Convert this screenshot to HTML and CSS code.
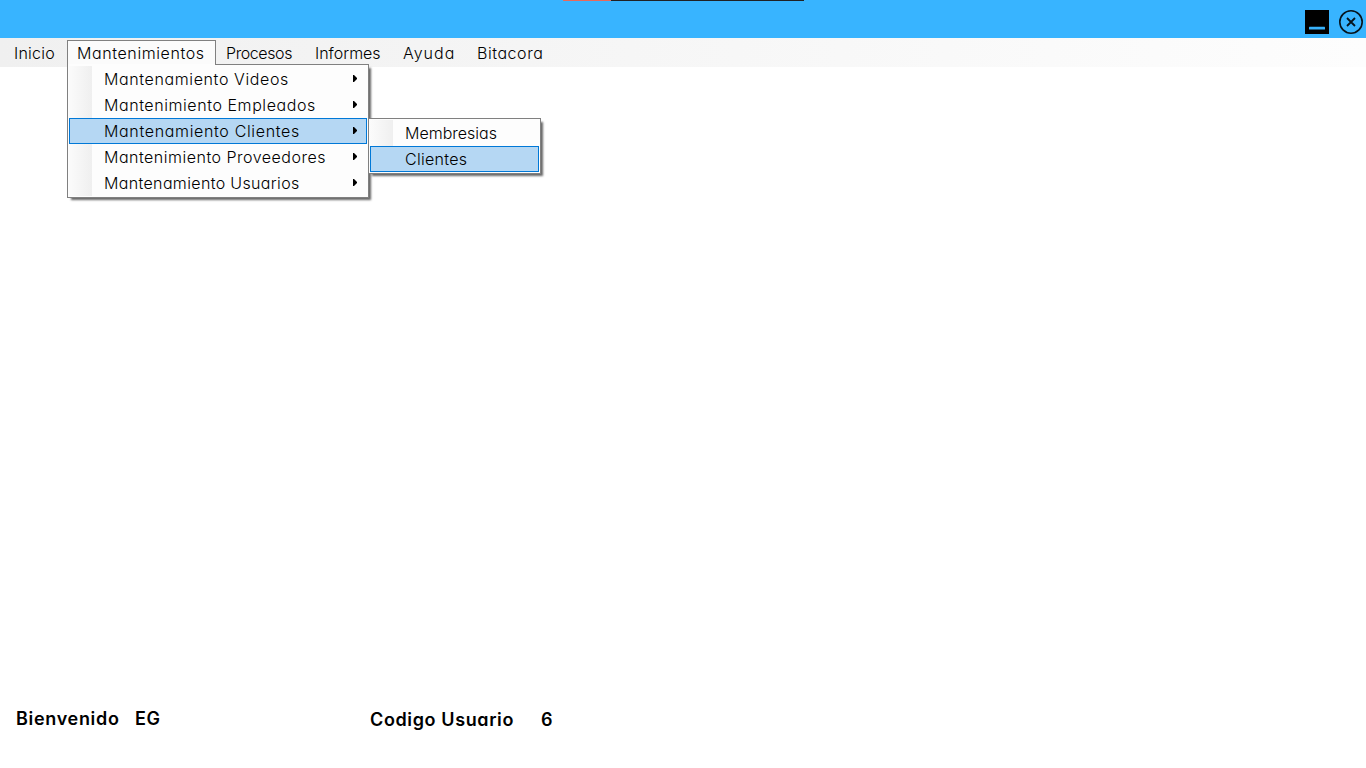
FILE: index.html
```html
<!DOCTYPE html>
<html lang="es">
<head>
<meta charset="utf-8">
<title>Mantenimientos</title>
<link rel="stylesheet" href="styles.css">
</head>
<body>
<div class="window">
  <header class="titlebar">
    <div class="top-strip"></div>
    <svg class="minimize" width="24" height="24" viewBox="0 0 24 24"><rect width="24" height="24" fill="#000"/><rect x="4" y="16.8" width="16" height="2.7" rx=".5" fill="#38b2fc"/></svg>
    <svg class="close" width="24" height="24" viewBox="0 0 24 24" fill="none" stroke="#06141d"><circle cx="12" cy="12" r="11.2" stroke-width="1.6"/><path d="M8 8l8 8M16 8l-8 8" stroke-width="1.8"/></svg>
  </header>
  <nav class="menubar">
    <span class="menu inicio">Inicio</span>
    <div class="menu open"><span class="mant">Mantenimientos</span>
      <div class="dropdown main-menu">
        <div class="item"><span class="videos">Mantenamiento Videos</span><svg class="arrow" width="4" height="7"><path d="M0 0h1l3 3v1l-3 3H0z"/></svg></div>
        <div class="item"><span class="empleados">Mantenimiento Empleados</span><svg class="arrow" width="4" height="7"><path d="M0 0h1l3 3v1l-3 3H0z"/></svg></div>
        <div class="item selected"><span class="clientes">Mantenamiento Clientes</span><svg class="arrow" width="4" height="7"><path d="M0 0h1l3 3v1l-3 3H0z"/></svg></div>
        <div class="item"><span class="proveedores">Mantenimiento Proveedores</span><svg class="arrow" width="4" height="7"><path d="M0 0h1l3 3v1l-3 3H0z"/></svg></div>
        <div class="item"><span class="usuarios">Mantenamiento Usuarios</span><svg class="arrow" width="4" height="7"><path d="M0 0h1l3 3v1l-3 3H0z"/></svg></div>
      </div>
      <div class="dropdown submenu">
        <div class="item"><span class="membresias">Membresias</span></div>
        <div class="item selected"><span class="cli">Clientes</span></div>
      </div>
    </div>
    <span class="menu procesos">Procesos</span>
    <span class="menu informes">Informes</span>
    <span class="menu ayuda">Ayuda</span>
    <span class="menu bitacora">Bitacora</span>
  </nav>
  <main class="workspace"></main>
  <footer class="status">
    <span class="welcome">Bienvenido</span>
    <span class="user">EG</span>
    <span class="code-label">Codigo Usuario</span>
    <span class="code">6</span>
  </footer>
</div>
</body>
</html>
```
FILE: styles.css
```css
* { box-sizing: border-box; }
body { margin: 0; background: #fff; color: #000; font-family: "Century Gothic", Inter, "Liberation Sans", sans-serif; font-size: 16px; font-weight: 300; font-feature-settings: "cv11" 1; }
.window { display: flex; flex-direction: column; width: 100%; height: 768px; overflow: hidden; }
.titlebar { position: relative; display: flex; justify-content: flex-end; gap: 10px; height: 38px; padding: 10px 3px 0 0; background: #38b4ff; }
.top-strip { position: absolute; top: 0; left: 563px; width: 241px; height: 1px; background: linear-gradient(90deg, #e8695b 48px, #202124 48px); }
.menubar { display: flex; height: 29px; padding-left: 14px; background: linear-gradient(90deg, #f0f0f0, #fdfdfd); line-height: 30px; white-space: nowrap; }
.menu { flex: none; }
.inicio { width: 53px; letter-spacing: .25px; }
.open { position: relative; width: 149px; height: 26px; margin-top: 2px; padding-left: 9px; border: 1px solid #808080; border-bottom: 0; background: #fbfbfb; line-height: 25px; }
.mant { letter-spacing: .6px; }
.procesos { width: 89px; margin-left: 10px; letter-spacing: -.4px; }
.informes { width: 88px; }
.ayuda { width: 74px; letter-spacing: 1px; }
.bitacora { letter-spacing: .55px; }
.dropdown { position: absolute; border: 1px solid #808080; background: #fdfdfd; box-shadow: 3px 3px 2px -1px rgba(0,0,0,.6); padding: 1px; }
.dropdown::before { content: ""; position: absolute; top: 1px; bottom: 1px; left: 1px; width: 23px; background: linear-gradient(90deg, #fbfbfb, #efefef); }
.main-menu { left: -1px; top: 23px; width: 302px; height: 134px; }
.main-menu::after { content: ""; position: absolute; top: -1px; left: 0; width: 147px; height: 1px; background: #fdfdfd; }
.submenu { left: 300px; top: 77px; width: 173px; height: 56px; }
.item { position: relative; display: flex; align-items: center; justify-content: space-between; height: 26px; padding: 0 10px 0 35px; line-height: 26px; }
.item.selected { background: #b5d7f3; box-shadow: inset 0 0 0 1px #0078d7; }
.arrow { margin-bottom: 1px; }
.videos { letter-spacing: .62px; }
.empleados { letter-spacing: .57px; }
.clientes { letter-spacing: .66px; }
.proveedores { letter-spacing: .5px; }
.usuarios { letter-spacing: .35px; }
.cli { letter-spacing: .3px; }
.workspace { flex: 1; }
.status { display: flex; height: 72px; padding-left: 16px; font-size: 18px; font-weight: 600; line-height: 45px; white-space: nowrap; }
.welcome { width: 119px; letter-spacing: .68px; }
.user { width: 235px; letter-spacing: .6px; }
.code-label { width: 171px; padding-top: 1px; letter-spacing: .62px; }
.code { padding-top: 1px; }
```
